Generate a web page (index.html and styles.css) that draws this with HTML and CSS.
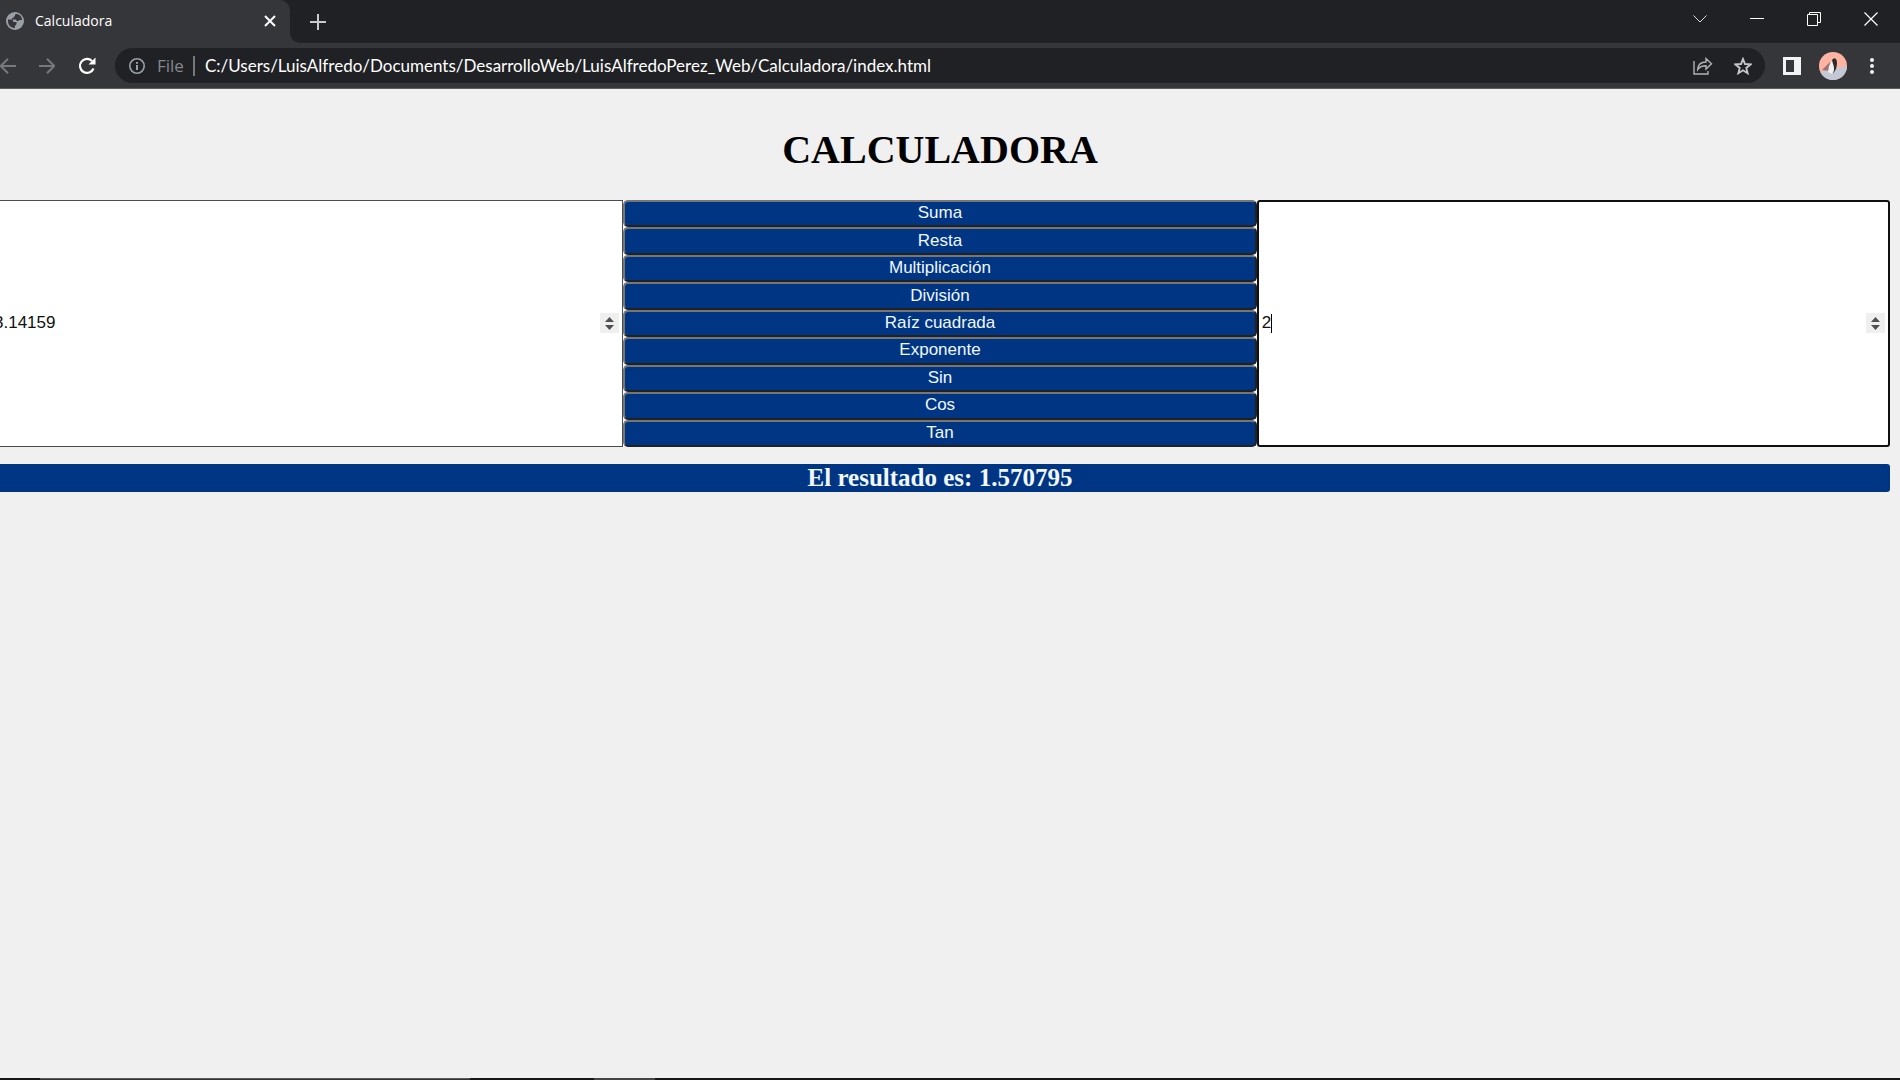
FILE: index.html
```html
<!DOCTYPE html>
<html lang="es">
<head>
<meta charset="utf-8">
<title>Calculadora</title>
<link rel="stylesheet" href="styles.css">
</head>
<body>
<header class="browser">
  <div class="tabstrip">
    <div class="tab">
      <svg class="globe" width="18" height="18" viewBox="0 0 18 18"><circle cx="9" cy="9" r="9" fill="#9aa0a6"/><path d="M2 7.500h3.500c1 0 1.500.7 1.500 1.500s.5 1 1.500 1h2v2c0 .8-1.500 1-1.500 2v2C4.500 16 2 13 2 9zM10 2c-1 0-1 1-1 1.500C9 4.500 7.500 4.500 7.500 6H6v1.500h3.500c.8 0 1 .5 1 1.500H12c1 0 1-1 1.500-1H16C16 4.500 13.500 2 10 2z" fill="#35363a"/></svg>
      <span class="tab-title">Calculadora</span>
      <button class="icon" aria-label="Close tab"><svg width="12" height="12" viewBox="0 0 12 12" stroke="#fff" stroke-width="2"><path d="M1 1l10 10M11 1L1 11"/></svg></button>
    </div>
    <div class="tab-end">
      <button class="icon new-tab" aria-label="New tab"><svg width="16" height="16" viewBox="0 0 16 16" stroke="#c8c9cb" stroke-width="2"><path d="M8 0v16M0 8h16"/></svg></button>
    </div>
    <div class="window-buttons">
      <button class="icon" aria-label="Search tabs"><svg width="14" height="14" viewBox="0 0 14 14" fill="none" stroke="#ddd"><path d="M.5 3.500l6.500 6.500 6.500-6.500"/></svg></button>
      <button class="icon" aria-label="Minimize"><svg width="14" height="14" viewBox="0 0 14 14" stroke="#fff"><path d="M0 6.500h14"/></svg></button>
      <button class="icon" aria-label="Restore"><svg width="14" height="14" viewBox="0 0 14 14" fill="none" stroke="#fff"><path d="M.5 2.500h10v11H.5zM2.500 2.500v-2h11v10h-3"/></svg></button>
      <button class="icon" aria-label="Close"><svg width="14" height="14" viewBox="0 0 14 14" stroke="#fff" stroke-width="1.200"><path d="M.5.5l13 13M13.500.5l-13 13"/></svg></button>
    </div>
  </div>
  <div class="toolbar">
    <div class="nav">
      <button class="icon" aria-label="Back"><svg width="16" height="16" viewBox="0 0 16 16" fill="none" stroke="#77787b" stroke-width="2"><path d="M16 8H1M8 .7L.7 8 8 15.300"/></svg></button>
      <button class="icon" aria-label="Forward"><svg width="16" height="16" viewBox="0 0 16 16" fill="none" stroke="#77787b" stroke-width="2"><path d="M0 8h15M8 .7L15.300 8 8 15.300"/></svg></button>
      <button class="icon" aria-label="Reload"><svg width="18" height="18" viewBox="0 0 18 18" fill="none" stroke="#fff" stroke-width="2.200"><path d="M15.500 11.500A7 7 0 1 1 14 4"/><path d="M17.500.5v7h-7z" fill="#fff" stroke="none"/></svg></button>
    </div>
    <div class="omnibox">
      <svg width="16" height="16" viewBox="0 0 16 16" fill="none" stroke="#9aa0a6" stroke-width="1.600"><circle cx="8" cy="8" r="7.200"/><path d="M8 7v5M8 4v1.800" stroke-width="2"/></svg>
      <span class="scheme">File</span>
      <input class="url" type="text" aria-label="Address" value="C:/Users/LuisAlfredo/Documents/DesarrolloWeb/LuisAlfredoPerez_Web/Calculadora/index.html">
      <button class="icon" aria-label="Share"><svg width="20" height="18" viewBox="0 0 20 18" fill="none" stroke="#b0b2b5" stroke-width="1.400"><path d="M1 4v13h14v-3M4.700 12.500C5 8 8 5 13 5V1.500l5.500 5.300L13 12V8.800c-4 0-6.500 1.200-8.300 3.700z"/></svg></button>
      <button class="icon" aria-label="Bookmark"><svg width="18" height="18" viewBox="0 0 18 18" fill="none" stroke="#c4c5c8" stroke-width="1.900"><path d="M9 2l2 5 5.500.4-4.200 3.500 1.300 5.300L9 13.300l-4.600 2.900 1.300-5.300L1.500 7.400 7 7z"/></svg></button>
    </div>
    <div class="actions">
      <button class="icon" aria-label="Side panel"><svg width="18" height="18" viewBox="0 0 18 18"><path fill="#f1f3f4" fill-rule="evenodd" d="M0 0h18v18H0zM3 3v12h8V3z"/></svg></button>
      <button class="icon" aria-label="Profile"><svg width="28" height="28" viewBox="0 0 28 28"><defs><clipPath id="avatar"><circle cx="14" cy="14" r="14"/></clipPath></defs><g clip-path="url(#avatar)"><path fill="#ffb3a3" d="M0 0h28v28H0z"/><path fill="#c3c8d6" d="M0 20l10-2 18-4v14H0z"/><path fill="#9c7475" d="M3 18l8-8v9z"/><path fill="#f3f1ee" d="M14 7l-4 7-1 6 4 2 4-7z"/><path fill="#292d2c" d="M13 8q2-3 4-1 2 3 0 10l-3 5q2-6 0-10z"/></g></svg></button>
      <button class="icon menu" aria-label="Menu"><svg width="4" height="16" viewBox="0 0 4 16" fill="#f1f3f4"><circle cx="2" cy="2" r="2"/><circle cx="2" cy="8" r="2"/><circle cx="2" cy="14" r="2"/></svg></button>
    </div>
  </div>
</header>
<main class="page">
  <h1>CALCULADORA</h1>
  <form class="calculator">
    <input class="number" type="number" step="any" value="3.14159" aria-label="Primer número">
    <div class="operations">
      <button type="button">Suma</button>
      <button type="button">Resta</button>
      <button type="button">Multiplicación</button>
      <button type="button">División</button>
      <button type="button">Raíz cuadrada</button>
      <button type="button">Exponente</button>
      <button type="button">Sin</button>
      <button type="button">Cos</button>
      <button type="button">Tan</button>
    </div>
    <div class="field">
      <input class="number active" type="number" step="any" value="2" aria-label="Segundo número">
      <span class="caret"></span>
    </div>
  </form>
  <h2 class="result">El resultado es: 1.570795</h2>
</main>
<footer class="taskbar"><span class="search-edge"></span><span class="app-edge"></span></footer>
</body>
</html>
```
FILE: styles.css
```css
* { box-sizing: border-box; }
body {
  margin: 0;
  min-height: 100vh;
  display: flex;
  flex-direction: column;
  background: #f0f0f0;
  font-family: "Liberation Serif", "Times New Roman", serif;
  overflow-x: hidden;
}
svg { display: block; flex: none; }

.browser {
  background: #35363a;
  border-bottom: 1px solid #5b5c5f;
  color: #fff;
  font-family: "Open Sans", "Segoe UI", sans-serif;
}
.icon {
  display: flex;
  align-items: center;
  justify-content: center;
  padding: 0;
  border: 0;
  background: none;
}
.tabstrip {
  display: flex;
  height: 43px;
  background: #202124;
}
.tab {
  display: flex;
  align-items: center;
  width: 290px;
  padding: 0 14px 2px 6px;
  background: #35363a;
  border-top-right-radius: 10px;
}
.tab-title {
  flex: 1;
  margin-left: 11px;
  font-size: 14px;
}
.tab-end {
  display: flex;
  background: linear-gradient(#202124 50%, #35363a 50%);
}
.new-tab {
  width: 55px;
  border-bottom-left-radius: 10px;
  background: #202124;
}
.window-buttons {
  display: flex;
  flex: 1;
  justify-content: flex-end;
  padding-right: 1px;
  background: #202124;
}
.window-buttons .icon {
  width: 57px;
  height: 37px;
}
.toolbar {
  display: flex;
  align-items: center;
  height: 45px;
}
.nav {
  display: flex;
  gap: 23px;
  width: 115px;
}
.omnibox {
  flex: 1;
  display: flex;
  align-items: center;
  height: 35px;
  padding: 0 13px 0 14px;
  border-radius: 18px;
  background: #202124;
  font-size: 17px;
}
.omnibox .icon { margin-left: 21px; }
.scheme {
  margin: 0 9px 0 12px;
  color: #85888c;
}
.url {
  flex: 1;
  height: 20px;
  padding: 0 0 1px 10px;
  border: 0;
  border-left: 2px solid #77797d;
  background: none;
  color: #fff;
  font-family: Lato, "Segoe UI", sans-serif;
  font-size: 17px;
}
.actions {
  display: flex;
  align-items: center;
  gap: 18px;
  padding: 0 26px 0 18px;
}
.menu { margin-left: 5px; }

.page {
  flex: 1;
  margin: 0 10px 0 -10px;
}
h1 {
  margin: 38px 0 27px;
  font-size: 40px;
  line-height: 46px;
  text-align: center;
}
.calculator {
  display: grid;
  grid-template-columns: repeat(3, 1fr);
  min-height: 247px;
}
.number {
  width: 100%;
  height: 100%;
  padding: 0 3px 2px;
  border: 1px solid #4c4c4c;
  background: #fff;
  color: #111;
  font-family: "Liberation Sans", Arial, sans-serif;
  font-size: 17px;
}
.number::-webkit-inner-spin-button {
  appearance: none;
  width: 19px;
  height: 20px;
  opacity: 1;
  background: #efefef url("data:image/svg+xml,%3Csvg xmlns='http://www.w3.org/2000/svg' viewBox='0 0 19 20'%3E%3Cpath fill='%23505050' d='M5 9l4.500-5 4.500 5zM5 12h9l-4.500 5z'/%3E%3C/svg%3E") center no-repeat;
}
.field { position: relative; }
.active {
  border: 2px solid #101010;
  border-radius: 3px;
}
.caret {
  position: absolute;
  top: 50%;
  left: 14px;
  width: 1px;
  height: 19px;
  margin-top: -10px;
  background: #000;
}
.operations {
  display: grid;
  grid-template-rows: repeat(9, 1fr);
  background: aliceblue;
}
.operations button {
  min-height: 0;
  padding: 0 6px 1px;
  border: 2px solid;
  border-color: #767676 #212121 #212121 #767676;
  border-radius: 5px;
  background: #003584;
  color: aliceblue;
  font-family: "Liberation Sans", Arial, sans-serif;
  font-size: 17px;
  line-height: 20px;
}
.result {
  margin: 17px 0 0;
  border-radius: 3px;
  background: #003584;
  color: aliceblue;
  font-size: 25px;
  line-height: 28px;
  text-align: center;
}
.taskbar {
  display: flex;
  gap: 124px;
  height: 2px;
  padding-left: 40px;
  background: #1a1718;
}
.search-edge {
  width: 430px;
  border-top: 1px solid #5c595a;
  background: #353233;
}
.app-edge {
  width: 61px;
  background: #484546;
}
```
